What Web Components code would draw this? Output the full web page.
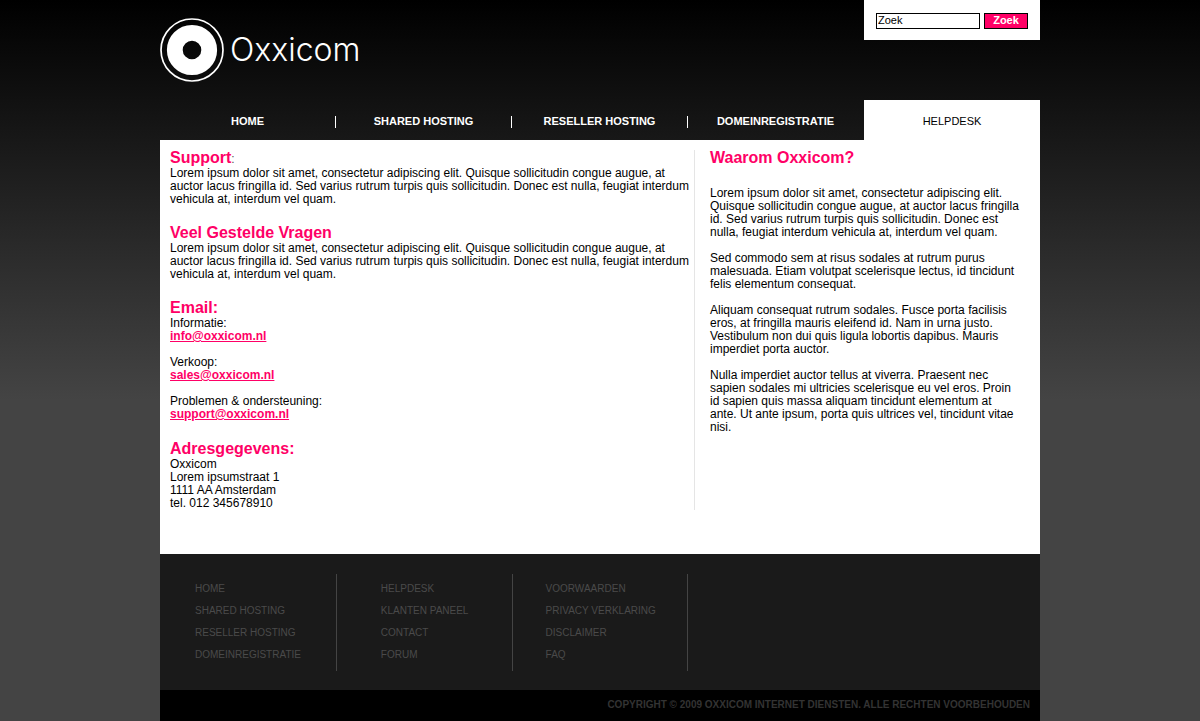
<!DOCTYPE html>
<html lang="nl">
<head>
<meta charset="utf-8">
<title>Oxxicom - Helpdesk</title>
<style>
html { background: #444 linear-gradient(#000, #444) 0 0 / 100% 400px no-repeat; min-height: 100%; }
body { margin: 0; font: 12px/13px "Liberation Sans", Arial, Helvetica, sans-serif; color: #000; }
</style>
</head>
<body>
<oxx-page></oxx-page>
<script>
const define = (name, html, setup) => customElements.define(name, class extends HTMLElement {
  constructor() {
    super();
    this.attachShadow({ mode: 'open' }).innerHTML = html;
  }
  connectedCallback() { if (setup) setup(this, this.shadowRoot); }
});

define('oxx-logo', `
<style>
:host { display: block; }
a { display: flex; align-items: center; gap: 6px; color: #fff; text-decoration: none; }
svg { display: block; }
span { font: 300 32px/40px Inter, "Liberation Sans", sans-serif; }
</style>
<a href="#"><svg width="64" height="64" viewBox="0 0 64 64" aria-hidden="true">
<circle cx="32" cy="32" r="31" fill="none" stroke="#fff" stroke-width="1.7"/>
<circle cx="32" cy="32" r="17.2" fill="none" stroke="#fff" stroke-width="15.8"/>
</svg><span>Oxxicom</span></a>`);

define('oxx-search', `
<style>
:host { display: block; background: #fff; }
form { display: flex; gap: 4px; padding: 13px 12px 11px; }
input, button { box-sizing: border-box; height: 16px; border: 1px solid #000; border-radius: 0; margin: 0; font: 11px/12px "Liberation Sans", Arial, sans-serif; }
input { flex: 1; min-width: 0; padding: 0 1px 2px; background: #fff; color: #000; }
button { width: 44px; padding: 0 0 2px; background: #f06; color: #fff; font-weight: bold; }
</style>
<form onsubmit="return false"><input type="text" aria-label="Zoek" value="Zoek"><button type="submit">Zoek</button></form>`);

define('oxx-tab', `
<style>
:host { display: block; flex: 1; padding: 16px 0 12px; }
a { display: block; border-right: 1px solid #fff; padding-bottom: 2px; font-size: 11px; line-height: 10px; text-align: center; color: #fff; text-decoration: none; text-transform: uppercase; font-weight: bold; }
:host([plain]) a { border-color: transparent; }
:host([active]) { background: #fff; }
:host([active]) a { color: #000; border: 0; font-weight: normal; }
</style>
<a href="#"><slot></slot></a>`);

define('oxx-section', `
<style>
:host { display: block; }
h2 { margin: 0 0 1px; font-size: 16px; line-height: 16px; color: #f06; }
</style>
<h2><slot name="title"></slot></h2><slot></slot>`);

define('oxx-mail', `
<style>
:host { display: block; }
a { color: #f06; font-weight: bold; }
</style>
<div><slot></slot></div><a></a>`, (el, root) => {
  const a = root.querySelector('a'), to = el.getAttribute('to');
  a.href = 'mailto:' + to;
  a.textContent = to;
});

define('oxx-links', `
<style>
:host { display: block; box-sizing: border-box; border-right: 1px solid #444; padding: 4px 0 5px; }
ul { list-style: none; margin: 0; padding: 0; }
a { color: #4a4a4a; text-decoration: none; text-transform: uppercase; font-size: 10px; line-height: 22px; display: block; }
</style>
<ul></ul>`, (el, root) => {
  root.querySelector('ul').innerHTML = el.getAttribute('items').split('|').map(t => `<li><a href="#">${t}</a></li>`).join('');
});

define('oxx-page', `
<style>
:host { display: block; max-width: 880px; margin: 0 auto; }
header { display: flex; justify-content: space-between; align-items: flex-start; }
oxx-logo { padding: 18px 0; }
oxx-search { width: 20%; }
nav { display: flex; }
main { display: flex; background: #fff; padding: 10px 10px 44px; }
.left { flex: 1; display: flex; flex-direction: column; gap: 19px; border-right: 1px solid #e5e5e5; }
.right { width: 310px; padding: 0 10px 0 15px; }
p { margin: 0 0 13px; }
.left p { margin: 0; }
.right h2 { margin: 0 0 21px; font-size: 16px; line-height: 16px; color: #f06; }
oxx-section span { font-weight: normal; font-size: 12px; line-height: 12px; color: #555; }
.mails { display: flex; flex-direction: column; gap: 13px; padding-bottom: 1px; }
.links { display: grid; grid-template-columns: repeat(5, 1fr); background: #1a1a1a; padding: 20px 0 19px 1px; }
.links oxx-links { padding-left: 34px; }
.links oxx-links + oxx-links { padding-left: 44px; }
.links oxx-links:last-child { padding-left: 33px; }
.copy { background: #000; color: #333; font-size: 10px; line-height: 12px; padding: 9px 10px 10px; text-align: right; text-transform: uppercase; font-weight: bold; }
</style>
<header><oxx-logo></oxx-logo><oxx-search></oxx-search></header>
<nav><oxx-tab>Home</oxx-tab><oxx-tab>Shared hosting</oxx-tab><oxx-tab>Reseller hosting</oxx-tab><oxx-tab plain>Domeinregistratie</oxx-tab><oxx-tab active>Helpdesk</oxx-tab></nav>
<main>
<div class="left">
<oxx-section><div slot="title">Support<span>:</span></div><p>Lorem ipsum dolor sit amet, consectetur adipiscing elit. Quisque sollicitudin congue augue, at auctor lacus fringilla id. Sed varius rutrum turpis quis sollicitudin. Donec est nulla, feugiat interdum vehicula at, interdum vel quam.</p></oxx-section>
<oxx-section><div slot="title">Veel Gestelde Vragen</div><p>Lorem ipsum dolor sit amet, consectetur adipiscing elit. Quisque sollicitudin congue augue, at auctor lacus fringilla id. Sed varius rutrum turpis quis sollicitudin. Donec est nulla, feugiat interdum vehicula at, interdum vel quam.</p></oxx-section>
<oxx-section><div slot="title">Email:</div><div class="mails"><oxx-mail to="info@oxxicom.nl">Informatie:</oxx-mail><oxx-mail to="sales@oxxicom.nl">Verkoop:</oxx-mail><oxx-mail to="support@oxxicom.nl">Problemen &amp; ondersteuning:</oxx-mail></div></oxx-section>
<oxx-section><div slot="title">Adresgegevens:</div><p>Oxxicom<br>Lorem ipsumstraat 1<br>1111 AA Amsterdam<br>tel. 012 345678910</p></oxx-section>
</div>
<div class="right">
<h2>Waarom Oxxicom?</h2>
<p>Lorem ipsum dolor sit amet, consectetur adipiscing elit. Quisque sollicitudin congue augue, at auctor lacus fringilla id. Sed varius rutrum turpis quis sollicitudin. Donec est nulla, feugiat interdum vehicula at, interdum vel quam.</p>
<p>Sed commodo sem at risus sodales at rutrum purus malesuada. Etiam volutpat scelerisque lectus, id tincidunt felis elementum consequat.</p>
<p>Aliquam consequat rutrum sodales. Fusce porta facilisis eros, at fringilla mauris eleifend id. Nam in urna justo. Vestibulum non dui quis ligula lobortis dapibus. Mauris imperdiet porta auctor.</p>
<p>Nulla imperdiet auctor tellus at viverra. Praesent nec sapien sodales mi ultricies scelerisque eu vel eros. Proin id sapien quis massa aliquam tincidunt elementum at ante. Ut ante ipsum, porta quis ultrices vel, tincidunt vitae nisi.</p>
</div>
</main>
<footer>
<div class="links"><oxx-links items="Home|Shared hosting|Reseller hosting|Domeinregistratie"></oxx-links><oxx-links items="Helpdesk|Klanten paneel|Contact|Forum"></oxx-links><oxx-links items="Voorwaarden|Privacy verklaring|Disclaimer|FAQ"></oxx-links></div>
<div class="copy">Copyright © 2009 Oxxicom Internet Diensten. Alle rechten voorbehouden</div>
</footer>`);
</script>
</body>
</html>
